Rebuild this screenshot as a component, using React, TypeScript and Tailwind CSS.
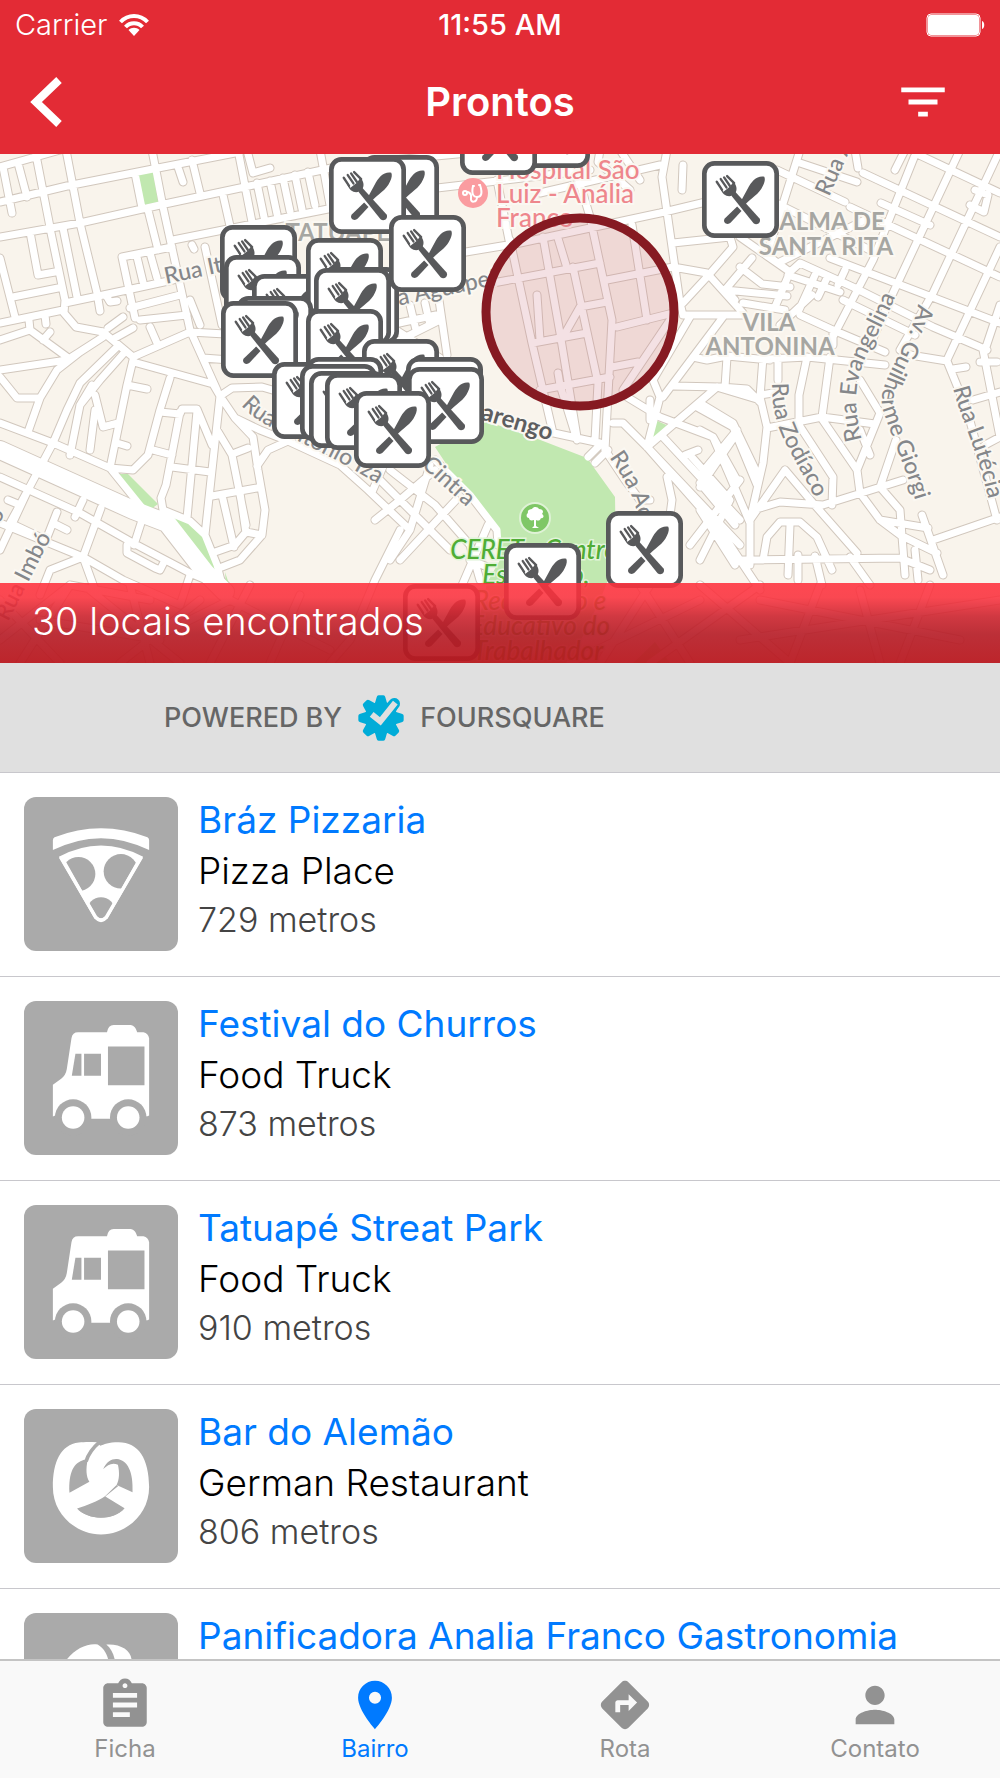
import type { ReactNode } from 'react'
import { MdAssignment, MdDirections, MdFilterList, MdPerson, MdPlace } from 'react-icons/md'

/* Street network of the neighbourhood, as polylines */
const streets: string[] = [
  // north-west grid
  'M0 167 L60 150', 'M0 202 L67 186 L153 169 L240 152', 'M0 237 L80 223 L160 205 L240 188 L345 165',
  'M173 240 L333 208 L420 190', 'M3 167 L12 213', 'M18 163 L27 197', 'M35 150 L50 227', 'M66 150 L80 223 L97 293 L100 311',
  'M135 173 L142 208', 'M152 150 L163 207 L190 330 L217 390', 'M178 167 L183 182', 'M192 160 L200 193', 'M238 150 L252 222',
  'M223 195 L230 226', 'M257 183 L264 217', 'M270 181 L277 214', 'M283 178 L290 211', 'M295 175 L302 209', 'M308 172 L315 205',
  'M320 150 L330 205', 'M248 154 L253 173 L270 168', 'M148 210 L158 250', 'M122 257 L172 247', 'M122 257 L135 318',
  'M30 232 L38 275 L55 272', 'M50 228 L65 300 L64 313 L76 327 L103 332', 'M63 228 L77 297', 'M65 303 L127 290 L173 280',
  'M0 258 L15 317', 'M13 297 L58 288', 'M0 323 L63 310', 'M130 308 L180 295', 'M140 320 L187 315', 'M137 257 L143 282',
  'M150 253 L157 278', 'M0 340 L30 330 L67 357', 'M0 370 L67 360 L103 337', 'M103 332 L133 357 L190 332 L260 336',
  'M0 377 L17 398 L40 398 L57 370 L80 352 L103 337', 'M67 410 L80 383 L117 347', 'M80 405 L100 380 L124 353',
  'M29 320 L30 330', 'M45 315 L46 324', 'M43 340 L50 332', 'M108 328 L123 317', 'M115 338 L133 328', 'M150 327 L157 343',
  'M192 245 L194 249', 'M205 247 L222 325', 'M190 300 L200 325', 'M107 297 L110 302 L117 301', 'M203 358 L230 360',
  'M133 360 L127 385 L147 389', 'M127 385 L110 468', 'M170 378 L160 410 L148 455 L133 470 L110 468', 'M137 363 L213 384 L220 396',
  'M220 396 L232 388 L262 387 L300 398',
  // west
  'M40 398 L28 432', 'M67 410 L53 443', 'M92 385 L80 405 L70 455', 'M95 395 L103 427 L118 423', 'M117 443 L127 446',
  'M160 412 L180 414 L182 409 L197 409 L212 445', 'M153 450 L172 455', 'M180 412 L166 485 L161 498 L163 510', 'M197 411 L187 518',
  'M172 467 L210 472', 'M220 396 L212 470 L205 535', 'M220 396 L235 418 L253 437 L258 470 L265 510 L262 535 L240 560 L222 567',
  'M235 418 L260 430 L288 441 L340 465 L368 490 L410 530', 'M217 430 L232 455 L246 525', 'M212 496 L257 488', 'M235 453 L248 448',
  'M222 495 L234 547', 'M215 552 L235 545 L246 532 L262 535', 'M240 493 L246 533', 'M288 441 L268 450 L257 466',
  'M163 510 L190 521 L205 535 L217 565 L226 600', 'M0 423 L53 443 L110 468 L148 515', 'M53 443 L28 490 L0 550',
  'M95 410 L90 450', 'M0 477 L80 513 L133 543 L190 573 L230 590', 'M0 523 L83 557 L123 580 L180 605', 'M10 523 L28 490',
  'M83 500 L75 517', 'M101 508 L83 557 L95 590', 'M142 520 L134 545', 'M127 545 L127 553 L155 568 L160 570 L165 560',
  'M57 512 L46 540 L10 523', 'M53 523 L67 530', 'M8 500 L20 505', 'M83 557 L50 570 L40 595', 'M190 575 L180 605',
  'M375 520 L400 500 L435 470', 'M400 530 L375 580 L350 640 L330 663', 'M385 462 L372 492', 'M390 470 L435 505 L470 545 L480 580',
  'M430 465 L410 530 L390 560', 'M380 480 L450 550', 'M456 500 L400 560', 'M488 525 L460 590', 'M470 560 L485 566',
  'M435 460 L470 495 L497 530 L498 545',
  // under the banner
  'M0 600 L60 663', 'M70 585 L20 663', 'M0 640 L70 585 L150 600', 'M130 585 L150 663', 'M90 590 L180 663', 'M200 600 L120 663',
  'M150 640 L230 600 L330 650', 'M230 600 L330 650', 'M40 620 L160 640', 'M250 585 L210 663', 'M300 595 L270 663',
  'M600 663 L650 585', 'M570 663 L700 600', 'M640 585 L690 663', 'M650 663 L760 585', 'M700 585 L790 663', 'M760 600 L960 640',
  'M820 585 L790 663', 'M860 590 L880 663', 'M930 585 L900 663', 'M740 640 L1000 600',
  // centre
  'M510 240 L532 343 L553 433', 'M543 237 L560 333 L577 437', 'M557 235 L567 268', 'M568 150 L578 177 L590 217 L612 320 L605 450',
  'M573 267 L598 383 L595 440', 'M632 225 L647 320', 'M493 283 L547 273 L600 263', 'M607 280 L673 267', 'M533 343 L587 333',
  'M563 337 L580 307 L607 302', 'M617 327 L673 313', 'M612 367 L638 362', 'M670 320 L623 390', 'M540 390 L610 377',
  'M460 253 L520 243 L660 213 L710 201', 'M667 150 L662 177 L670 233 L680 303 L683 315', 'M497 180 L510 245',
  'M683 315 L743 315', 'M673 243 L730 237 L733 247 L707 277 L683 303', 'M673 267 L707 273 L743 313', 'M690 317 L653 380 L660 397 L647 447',
  'M723 317 L663 397', 'M673 386 L720 387 L747 389 L760 402', 'M693 357 L707 360 L727 356 L770 360', 'M727 357 L725 387',
  'M627 397 L660 417 L713 437 L737 480', 'M697 407 L733 427 L757 485', 'M613 423 L623 423 L650 450 L740 545', 'M647 447 L717 387',
  'M737 430 L700 475', 'M663 437 L740 520', 'M537 295 L540 340', 'M558 373 L560 385 L577 440', 'M540 430 L600 443', 'M600 445 L588 457',
  'M608 450 L595 463', 'M650 400 L650 420', 'M685 455 L698 450', 'M690 455 L730 500 L700 560', 'M647 447 L720 530 L760 590',
  'M667 477 L672 500 L668 530', 'M605 450 L625 480 L640 500', 'M640 500 L650 500', 'M740 480 L690 545', 'M340 165 L500 150',
  'M400 245 L460 235', 'M420 190 L590 170', 'M540 193 L660 165', 'M620 150 L640 180', 'M600 150 L598 162 L630 190', 'M683 165 L682 190',
  'M390 345 L440 320', 'M390 325 L436 315', 'M439 300 L447 355', 'M410 305 L416 330', 'M425 303 L430 325', 'M396 330 L440 358',
  // north-east
  'M800 150 L770 245', 'M800 163 L857 182', 'M777 170 L845 202', 'M863 173 L1000 237', 'M915 153 L1000 193', 'M850 207 L1000 277',
  'M917 150 L873 260 L833 337', 'M960 150 L893 293 L870 345', 'M1000 150 L933 293 L900 350', 'M1000 247 L947 360',
  'M760 250 L790 272 L800 263 L853 287 L933 327 L987 350', 'M830 258 L1000 323', 'M843 300 L915 335', 'M1000 305 L985 350',
  'M855 150 L858 168', 'M905 150 L895 170', 'M975 190 L988 195 L984 212 L970 205', 'M881 203 L930 225', 'M740 237 L790 272 L775 307',
  'M752 258 L725 290', 'M740 267 L762 284 L790 287', 'M725 290 L787 296', 'M726 290 L735 300', 'M743 303 L785 310',
  'M788 275 L840 292', 'M815 275 L799 310', 'M826 280 L818 297', 'M845 270 L838 285', 'M812 295 L780 325',
  'M800 315 L833 330 L885 352', 'M833 330 L833 345', 'M780 262 L875 215', 'M770 200 L870 250',
  // east
  'M768 359 L807 357 L885 365', 'M910 355 L947 361', 'M947 361 L967 410 L997 520', 'M983 350 L1000 437', 'M973 400 L1000 392',
  'M953 369 L966 367', 'M980 362 L997 362', 'M807 357 L799 395 L799 423', 'M830 357 L822 417', 'M763 357 L760 397 L767 427 L763 463 L750 520 L750 565',
  'M778 357 L778 380', 'M760 395 L773 393', 'M767 428 L822 417 L875 424', 'M799 425 L833 477 L832 505', 'M822 419 L857 470 L860 493 L880 520 L900 535 L937 553',
  'M860 380 L880 413 L857 470', 'M785 470 L813 503 L857 553', 'M785 470 L750 520', 'M753 510 L780 502 L823 505 L903 480',
  'M896 440 L880 487 L900 510 L905 575', 'M922 515 L943 575', 'M933 540 L1000 517', 'M880 520 L928 528', 'M763 560 L767 537 L780 522 L800 522 L817 537 L832 570',
  'M740 560 L900 558 L930 570', 'M790 525 L788 575', 'M700 403 L733 423 L757 473', 'M700 430 L713 437 L750 523', 'M700 483 L735 525',
  'M700 510 L735 565', 'M737 433 L700 487', 'M985 445 L1000 437', 'M860 430 L870 455', 'M798 555 L798 580', 'M760 400 L720 388',
  'M850 557 L870 585', 'M815 556 L822 585', 'M915 550 L918 580',
]

const highways: string[] = ['M0 450 L133 510 L167 523 L205 572 L225 592']

/* Top-left corner of each restaurant marker, back to front */
const pins: [number, number][] = [
  [513, 91], [460, 98], [362, 155], [329, 157], [220, 225], [224, 255], [252, 274], [306, 238], [322, 267], [314, 268],
  [389, 215], [236, 296], [221, 301], [306, 309], [362, 339], [272, 362], [306, 357], [300, 364], [309, 371], [325, 373],
  [406, 357], [407, 367], [354, 391], [702, 161], [403, 584], [504, 543], [606, 511],
]

function Pin({ x, y }: { x: number; y: number }) {
  return (
    <svg x={x} y={y} width="77" height="77" viewBox="0 0 230 230">
      <rect x="7" y="7" width="216" height="216" rx="30" fill="#fff" stroke="#58595b" strokeWidth="14" />
      <g fill="#58595b" stroke="#58595b" strokeLinecap="round">
        <path stroke="none" d="M186 47 C164 43 148 60 136 84 L114 124 L126 134 C148 108 171 100 182 74 C188 62 189 53 186 47Z" />
        <path stroke="none" d="M105 136 L118 149 L86 184 C76 194 60 184 68 172Z" />
        <path stroke="none" d="M98 90 L172 172 C178 184 164 194 154 186 L88 104Z" />
        <path stroke="none" d="M54 80 C62 108 86 110 98 98 C108 86 102 70 94 62 L84 76 L64 92Z" />
        <path strokeWidth="7" d="M44 62 L60 86 M56 54 L73 79 M66 49 L83 74 M75 45 L96 66" fill="none" />
      </g>
    </svg>
  )
}

const halo = { paintOrder: 'stroke' as const }

function NeighbourhoodMap() {
  return (
    <svg
      className="block h-full w-full font-['Lato','Open_Sans',sans-serif]"
      viewBox="0 154 1000 509"
      preserveAspectRatio="xMidYMid slice"
      role="img"
      aria-label="Mapa do bairro"
    >
      <defs>
        <path id="zodiaco" d="M772 383 C772 435 790 445 824 516" />
        <path id="evangelina" d="M862 440 C850 395 858 370 873 343 C885 320 890 310 906 272" />
        <path id="guilherme" d="M918 304 C910 350 872 385 884 413 C900 460 908 470 928 545" />
        <path id="lutecia" d="M953 388 C962 425 978 445 994 525" />
        <path id="izar" d="M241 405 C262 430 300 437 378 484" />
        <path id="acuru" d="M609 457 C632 490 634 500 646 545" />
      </defs>
      <rect x="0" y="100" width="1000" height="620" fill="#f9f4ec" />
      <g fill="none" strokeLinecap="round" strokeLinejoin="round">
        <path d={streets.join(' ')} stroke="#d1c7bd" strokeWidth="9" />
        <path d={highways.join(' ')} stroke="#d1c7bd" strokeWidth="20" />
      </g>
      <g fill="#c1e8b0">
        <path d="M138 174 L153 172 L158 202 L144 205Z" />
        <path d="M118 474 L128 474 L158 504 L147 512 L142 508Z" />
        <path d="M155 512 C185 515 203 530 206 543 L217 569 L213 573 C200 565 182 530 155 512Z" />
        <path d="M225 572 L229 584 L226 584Z M655 420 L671 427 L652 440Z" />
        <path d="M435 447 L483 420 L530 436 L587 458 L615 497 L616 560 L600 600 L570 663 L470 663 L487 583 L500 560 L500 530 L470 500Z" />
        <path d="M633 663 L655 642 L670 663Z" />
      </g>
      <g fill="none" stroke="#fff" strokeLinecap="round" strokeLinejoin="round">
        <path d={streets.join(' ')} strokeWidth="7" />
        <path d={highways.join(' ')} strokeWidth="18" />
      </g>

      <g fill="#a6a6a2" stroke="#fbf8f2" strokeWidth="4" fontWeight="700" fontSize="24" textAnchor="middle" style={halo}>
        <text x="338" y="241">TATUAPÉ</text>
        <text x="832" y="230">ALMA DE</text>
        <text x="826" y="255">SANTA RITA</text>
        <text x="769" y="331">VILA</text>
        <text x="770" y="355">ANTONINA</text>
      </g>
      <g fill="#85878a" stroke="#fbf8f2" strokeWidth="4" fontSize="23" fontWeight="500" style={halo}>
        <text transform="translate(166 284) rotate(-12)">Rua Itapura</text>
        <text transform="translate(373 311) rotate(-12)">Rua Aguapeí</text>
        <text transform="translate(829 197) rotate(-66)">Rua Antônio</text>
        <text transform="translate(8 622) rotate(-63)">Rua Imbó</text>
        <text transform="translate(-8 536) rotate(-60)">do</text>
        <text transform="translate(421 466) rotate(42)">Cintra</text>
        <text><textPath href="#izar">Rua Antônio Izar</textPath></text>
        <text><textPath href="#acuru">Rua Açuru</textPath></text>
        <text><textPath href="#zodiaco">Rua Zodíaco</textPath></text>
        <text><textPath href="#evangelina">Rua Evangelina</textPath></text>
        <text><textPath href="#guilherme">Av. Guilherme Giorgi</textPath></text>
        <text><textPath href="#lutecia">Rua Lutécia</textPath></text>
      </g>
      <text transform="translate(480 419) rotate(17)" fill="#5d5e60" stroke="#fbf8f2" strokeWidth="4" fontWeight="700" fontSize="24" style={halo}>
        arengo
      </text>

      <g fill="#ee868c" stroke="#fbf8f2" strokeWidth="4" fontSize="26" fontWeight="500" style={halo}>
        <text x="496" y="179">Hospital São</text>
        <text x="496" y="203">Luiz - Anália</text>
        <text x="496" y="227">Franco</text>
      </g>
      <circle cx="473" cy="193" r="15" fill="#fa9ca0" />
      <g fill="none" stroke="#fff" strokeWidth="2" strokeLinecap="round">
        <path d="M474 186 L473 186 C471 195 474 197 477 197 C481 197 483 194 480 185 L479 185" />
        <path d="M477 197 C477 203 470 203 471 198 C472 193 468 192 467 192" />
        <circle cx="465" cy="193" r="2" />
      </g>

      <circle cx="535" cy="518" r="15" fill="#7fc766" stroke="#dff2d6" strokeWidth="2" />
      <path fill="#fff" d="M532 528 L534 526 L534 520 C531 521 529 520 529 518 C526 518 526 514 528 513 C527 510 530 509 532 509 C534 506 538 507 539 509 C543 509 544 512 542 514 C545 516 543 519 541 518 C540 521 538 521 536 520 L536 526 L539 528Z" />

      <g fill="#4fad36" stroke="#e2f4da" strokeWidth="3" fontSize="26" fontStyle="italic" fontWeight="500" textAnchor="middle" style={halo}>
        <text x="534" y="559">CERET - Centro</text>
        <text x="536" y="584">Esportivo,</text>
        <text x="540" y="610">Recreativo e</text>
        <text x="540" y="635">Educativo do</text>
        <text x="538" y="660">Trabalhador</text>
      </g>

      <circle cx="580" cy="312" r="94" fill="#d08090" fillOpacity="0.24" stroke="#861a22" strokeWidth="9" />
      {pins.map(([x, y]) => (
        <Pin key={`${x}-${y}`} x={x} y={y} />
      ))}
    </svg>
  )
}

function PizzaIcon() {
  return (
    <svg className="size-full" viewBox="0 0 464 464" aria-hidden="true">
      <clipPath id="slice">
        <path d="M100 150 L118 180 L219 360 Q232 372 246 360 L347 180 L370 150 Z" />
      </clipPath>
      <path fill="#fff" d="M87 130 Q87 124 92 121 Q232 67 372 121 Q377 124 377 130 V160 Q232 88 87 160Z" />
      <path fill="#fff" d="M105 180 Q232 112 359 180 L252 366 Q232 388 212 366Z" />
      <g fill="#aaa" clipPath="url(#slice)">
        <circle cx="164" cy="232" r="51" />
        <circle cx="292" cy="224" r="52" />
        <circle cx="232" cy="344" r="42" />
      </g>
      <path fill="none" stroke="#fff" strokeWidth="10" d="M110 181 L216 362 Q232 380 248 362 L354 181" />
    </svg>
  )
}

function TruckIcon() {
  return (
    <svg className="size-full" viewBox="0 0 464 464" aria-hidden="true">
      <path fill="#fff" d="M87 252 L112 234 Q126 224 129 205 L143 112 Q146 94 163 94 H250 Q254 72 270 72 H322 Q336 74 341 94 H360 Q374 97 377 112 V345 L370 348 L320 320 L260 355 H203 L150 310 L94 345 L87 348Z" />
      <g fill="#aaa">
        <path d="M155 159 H173 V225 H144Z" />
        <path d="M181 159 H232 V225 H181Z M253 137 H363 V254 H253Z" />
        <circle cx="148" cy="351" r="55" />
        <circle cx="314" cy="351" r="55" />
      </g>
      <circle cx="148" cy="351" r="34" fill="#fff" />
      <circle cx="314" cy="351" r="34" fill="#fff" />
    </svg>
  )
}

function PretzelIcon() {
  return (
    <svg className="size-full" viewBox="0 0 464 464" aria-hidden="true">
      <path fill="#fff" d="M165 101 C110 108 87 160 87 235 C87 320 160 378 232 378 C305 378 377 320 377 235 C377 150 345 100 285 100 C255 100 240 106 230 111 L219 100 C200 99 180 99 165 101Z" />
      <g fill="#aaa">
        <path d="M181 153 C150 162 134 190 137 252 L197 219 C187 205 186 180 192 152Z" />
        <path d="M239 180 C250 158 264 150 280 151 C312 154 330 190 327 251 L279 229 C288 212 288 190 283 168 C266 160 252 168 239 181Z" />
        <path d="M160 300 C195 330 270 330 303 299 C270 337 195 337 160 300Z" />
        <path d="M160 300 C190 290 222 278 245 262 L279 229 L284 232 L245 264 L303 299 C270 336 195 337 160 300Z" />
      </g>
      <path fill="none" stroke="#aaa" strokeWidth="11" d="M187 158 C194 132 208 116 229 98" />
    </svg>
  )
}

function BreadIcon() {
  return (
    <svg className="size-full" viewBox="0 0 464 464" aria-hidden="true">
      <g fill="#fff">
        <path d="M110 180 C125 120 185 88 222 95 C244 108 256 130 260 180Z" />
        <path d="M248 95 C290 92 322 112 324 140 L340 139 L360 180 H278 C276 135 268 112 248 95Z" />
        <path d="M100 195 H370 C380 280 330 350 232 350 C134 350 90 280 100 195Z" />
      </g>
    </svg>
  )
}

function FoursquareIcon() {
  return (
    <svg className="size-[46px]" viewBox="-69 -69 138 138" aria-hidden="true">
      <g fill="#00acd8">
        <circle r="49" />
        {[0, 45, 90, 135, 180, 225, 270, 315].map((angle) => (
          <path key={angle} transform={`rotate(${angle})`} d="M-20 -38 L-13 -62 Q-12 -68 -7 -68 H7 Q12 -68 13 -62 L20 -38Z" />
        ))}
      </g>
      <path fill="none" stroke="#00acd8" strokeWidth="34" strokeLinejoin="round" strokeLinecap="round" d="M30 -32 L40 -43" />
      <path fill="none" stroke="#e0e0e0" strokeWidth="18" strokeLinejoin="miter" d="M-28 -11 L-2 10 L43 -46" />
    </svg>
  )
}

type Place = { name: string; kind: string; distance: string; icon: ReactNode }

const places: Place[] = [
  { name: 'Bráz Pizzaria', kind: 'Pizza Place', distance: '729 metros', icon: <PizzaIcon /> },
  { name: 'Festival do Churros', kind: 'Food Truck', distance: '873 metros', icon: <TruckIcon /> },
  { name: 'Tatuapé Streat Park', kind: 'Food Truck', distance: '910 metros', icon: <TruckIcon /> },
  { name: 'Bar do Alemão', kind: 'German Restaurant', distance: '806 metros', icon: <PretzelIcon /> },
  { name: 'Panificadora Analia Franco Gastronomia', kind: 'Bakery', distance: '850 metros', icon: <BreadIcon /> },
]

const tabs = [
  { label: 'Ficha', Icon: MdAssignment, active: false },
  { label: 'Bairro', Icon: MdPlace, active: true },
  { label: 'Rota', Icon: MdDirections, active: false },
  { label: 'Contato', Icon: MdPerson, active: false },
]

export default function App() {
  return (
    <div className="flex h-screen flex-col overflow-hidden bg-white font-['Inter',sans-serif]">
      <header className="shrink-0 bg-[#e32b35] text-white">
        <div className="grid h-[50px] grid-cols-[1fr_auto_1fr] items-center px-[15px] text-[29px] leading-8">
          <div className="flex items-center gap-3">
            <span className="font-light">Carrier</span>
            <svg className="h-6 w-[30px]" viewBox="0 0 30 24" aria-hidden="true">
              <g fill="none" stroke="#fff" strokeWidth="4">
                <path d="M1.500 9 C9 1 21 1 28.500 9" />
                <path d="M6.500 14 C11 9 19 9 23.500 14" />
              </g>
              <path fill="#fff" d="M9.500 17 C12.500 14 17.500 14 20.500 17 L15 23Z" />
            </svg>
          </div>
          <span className="text-center font-medium">11:55 AM</span>
          <svg className="h-6 w-[59px] justify-self-end" viewBox="0 0 59 24" aria-hidden="true">
            <rect x="1" y="1" width="53" height="22" rx="4" fill="none" stroke="#fff" strokeWidth="1" />
            <rect x="2" y="2" width="51" height="20" rx="3" fill="#fff" />
            <path fill="#fff" d="M56 8 C59 9 59 15 56 16Z" />
          </svg>
        </div>
        <div className="grid h-[104px] grid-cols-[1fr_auto_1fr] items-center px-[28px]">
          <button type="button" aria-label="Voltar" className="justify-self-start">
            <svg className="h-[52px] w-[34px]" viewBox="0 0 34 52" aria-hidden="true">
              <path fill="none" stroke="#fff" strokeWidth="8" d="M31 4 L8 26 L31 48" />
            </svg>
          </button>
          <h1 className="text-center text-[40px] leading-[48px] font-semibold">Prontos</h1>
          <button type="button" aria-label="Filtrar" className="mr-5 justify-self-end">
            <MdFilterList className="size-[58px]" />
          </button>
        </div>
      </header>

      <main className="flex min-h-0 flex-1 flex-col">
        <section className="relative h-[509px] shrink-0 overflow-hidden">
          <NeighbourhoodMap />
          <div className="absolute inset-x-0 bottom-0 flex h-20 items-center bg-[linear-gradient(#ff303ce0_0%,#fa303ce0_18%,#cb222de4_42%,#b61c26e8_64%,#b9181ff0_100%)] pb-1 pl-8">
            <p className="text-[38px] leading-[48px] font-light text-white">30 locais encontrados</p>
          </div>
        </section>

        <div className="flex h-[110px] shrink-0 items-center gap-4 border-b border-[#c8c7cc] bg-[#e0e0e0] pl-[164px] text-[27px] leading-8 font-medium text-[#666]">
          <span>POWERED BY</span>
          <FoursquareIcon />
          <span>FOURSQUARE</span>
        </div>

        <ul className="min-h-0 flex-1 overflow-hidden">
          {places.map((place) => (
            <li key={place.name} className="flex h-[204px] gap-5 border-b border-[#c8c7cc] p-6">
              <div className="size-[154px] shrink-0 rounded-xl bg-[#aaa]">{place.icon}</div>
              <div className="min-w-0 whitespace-nowrap">
                <a href="#place" className="block text-[37px] leading-[46px] text-[#007aff]">{place.name}</a>
                <p className="text-[37px] leading-[56px] font-light text-black">{place.kind}</p>
                <p className="text-[34px] leading-[42px] font-light text-[#444]">{place.distance}</p>
              </div>
            </li>
          ))}
        </ul>
      </main>

      <nav className="grid h-[119px] shrink-0 grid-cols-4 border-t-2 border-[#c4c4c4] bg-[#f9f9f9]">
        {tabs.map(({ label, Icon, active }) => (
          <a
            key={label}
            href={`#${label.toLowerCase()}`}
            aria-current={active ? 'page' : undefined}
            className={`flex flex-col items-center pt-[15px] text-[24px] leading-[30px] ${active ? 'text-[#007aff]' : 'text-[#929292]'}`}
          >
            <Icon className="size-[58px]" />
            <span>{label}</span>
          </a>
        ))}
      </nav>
    </div>
  )
}
